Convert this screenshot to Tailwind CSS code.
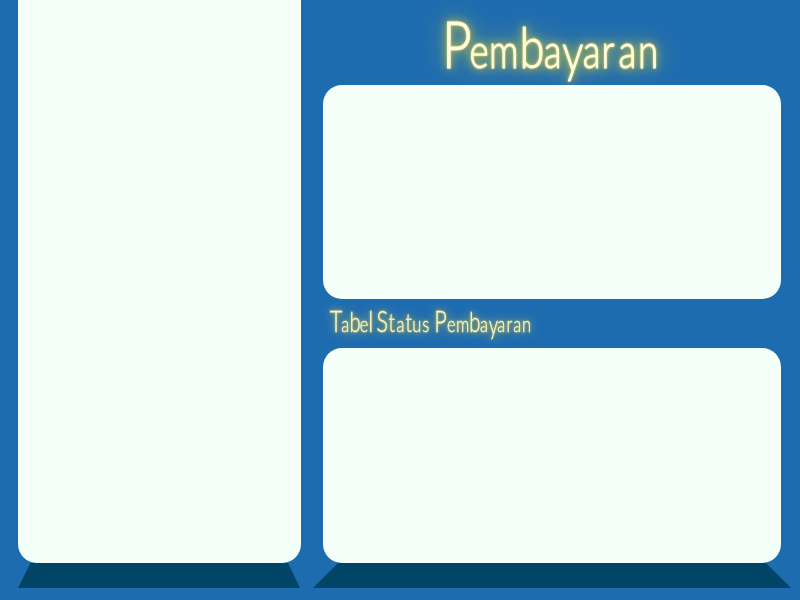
<!DOCTYPE html>
<html lang="id"><head><meta charset="utf-8"><title>Pembayaran</title>
<script src="https://cdn.jsdelivr.net/npm/@tailwindcss/browser@4"></script></head>
<body class="h-[600px] w-[800px] overflow-hidden bg-[#1e6cb0] font-['Lato',sans-serif]">
<main class="flex h-full gap-[12px] pl-[18px]">
  <section class="flex w-[283px] flex-col">
    <div class="z-10 w-[282.5px] h-[563.4px] shrink-0 rounded-b-[19px] bg-[#f5fffa]"></div>
    <div class="-mt-[0.4px] h-[25px] w-[282px] bg-[#004466] [clip-path:polygon(12.5px_0,270px_0,100%_100%,0_100%)]"></div>
  </section>
  <section class="flex w-[478px] flex-col">
    <h1 class="h-[84.5px] shrink-0">
      <svg class="h-full w-full overflow-visible fill-[#fffbe0] stroke-[#fffbe0] font-light [filter:drop-shadow(0_0_1px_#e8df55)_drop-shadow(0_0_5px_#bdbb55)_drop-shadow(0_0_12px_#ffe9004d)]" viewBox="313 0 478 84.5" stroke-width="1" stroke-linejoin="round">
        <g transform="scale(.78 1)"><text y="68" font-size="47"><tspan font-size="65" x="567">P</tspan><tspan x="602 627">em</tspan><tspan font-size="58" x="666">b</tspan><tspan x="697">a</tspan><tspan font-size="54" x="721" y="72">y</tspan><tspan x="747 771 793 818" y="68">aran</tspan></text></g>
      </svg>
    </h1>
    <div class="z-10 ml-[10px] h-[214.7px] w-[458px] shrink-0 rounded-[19px] bg-[#f5fffa]"></div>
    <h2 class="h-[48.8px] shrink-0">
      <svg class="h-full w-full overflow-visible fill-[#fff5c5] stroke-[#fff5c5] font-light [filter:drop-shadow(0_0_1px_#c8c86f)_drop-shadow(0_0_4px_#a5ad5c)]" viewBox="313 299.2 478 48.8" stroke-width="0.3">
        <g transform="scale(.75 1)"><text y="332.5" font-size="22"><tspan font-size="29" x="439.5">T</tspan><tspan x="455">a</tspan><tspan font-size="27" x="466">b</tspan><tspan x="479.5">e</tspan><tspan font-size="30" x="491">l</tspan><tspan font-size="29" x="502">S</tspan><tspan font-size="25" x="518">t</tspan><tspan x="528.5">a</tspan><tspan font-size="25" x="540.5">t</tspan><tspan x="549.5 563">us</tspan><tspan font-size="29" x="579">P</tspan><tspan x="596 608">em</tspan><tspan font-size="27" x="625.5">b</tspan><tspan x="640">a</tspan><tspan font-size="25" x="651.5" y="334">y</tspan><tspan x="663 675.5 684.5 696" y="332.5">aran</tspan></text></g>
      </svg>
    </h2>
    <div class="z-10 ml-[10px] h-[215px] w-[458px] shrink-0 rounded-[19px] bg-[#f5fffa]"></div>
    <div class="h-[25px] w-[478px] bg-[#004466] [clip-path:polygon(25px_0,453px_0,100%_100%,0_100%)]"></div>
  </section>
</main></body></html>
